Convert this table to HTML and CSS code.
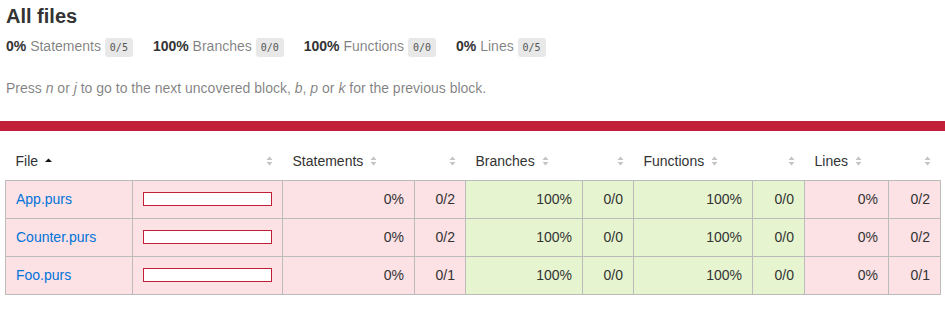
FILE: index.html
```html
<!DOCTYPE html>
<html lang="en">
<head>
<meta charset="utf-8">
<title>Code coverage report for All files</title>
<link rel="stylesheet" href="styles.css">
</head>
<body>
<div class="head">
  <h1>All files</h1>
  <div class="summary">
    <div class="stat"><span class="strong">0% </span> <span class="quiet">Statements</span> <span class="fraction">0/5</span></div>
    <div class="stat"><span class="strong">100% </span> <span class="quiet">Branches</span> <span class="fraction">0/0</span></div>
    <div class="stat"><span class="strong">100% </span> <span class="quiet">Functions</span> <span class="fraction">0/0</span></div>
    <div class="stat"><span class="strong">0% </span> <span class="quiet">Lines</span> <span class="fraction">0/5</span></div>
  </div>
  <p class="quiet hint">Press <em>n</em> or <em>j</em> to go to the next uncovered block, <em>b</em>, <em>p</em> or <em>k</em> for the previous block.</p>
</div>
<div class="status-line low"></div>
<div class="body">
<table class="coverage-summary">
  <colgroup>
    <col class="c-file"><col class="c-pic"><col class="c-st"><col class="c-abs"><col class="c-br"><col class="c-abs"><col class="c-fn"><col class="c-abs2"><col class="c-ln"><col class="c-abs2">
  </colgroup>
  <thead>
    <tr>
      <th class="file sorted">File<svg class="sorter" viewBox="0 0 7 10" width="7" height="10"><polygon points="0,6 3.5,2.5 7,6" fill="#111"/></svg></th>
      <th class="pic"><svg class="sorter" viewBox="0 0 7 10" width="7" height="10"><polygon points="0.5,4 3.5,0.5 6.5,4" fill="#c4c4c4"/><polygon points="0.5,6 6.5,6 3.5,9.5" fill="#c4c4c4"/></svg></th>
      <th class="pct">Statements<svg class="sorter" viewBox="0 0 7 10" width="7" height="10"><polygon points="0.5,4 3.5,0.5 6.5,4" fill="#c4c4c4"/><polygon points="0.5,6 6.5,6 3.5,9.5" fill="#c4c4c4"/></svg></th>
      <th class="abs"><svg class="sorter" viewBox="0 0 7 10" width="7" height="10"><polygon points="0.5,4 3.5,0.5 6.5,4" fill="#c4c4c4"/><polygon points="0.5,6 6.5,6 3.5,9.5" fill="#c4c4c4"/></svg></th>
      <th class="pct">Branches<svg class="sorter" viewBox="0 0 7 10" width="7" height="10"><polygon points="0.5,4 3.5,0.5 6.5,4" fill="#c4c4c4"/><polygon points="0.5,6 6.5,6 3.5,9.5" fill="#c4c4c4"/></svg></th>
      <th class="abs"><svg class="sorter" viewBox="0 0 7 10" width="7" height="10"><polygon points="0.5,4 3.5,0.5 6.5,4" fill="#c4c4c4"/><polygon points="0.5,6 6.5,6 3.5,9.5" fill="#c4c4c4"/></svg></th>
      <th class="pct">Functions<svg class="sorter" viewBox="0 0 7 10" width="7" height="10"><polygon points="0.5,4 3.5,0.5 6.5,4" fill="#c4c4c4"/><polygon points="0.5,6 6.5,6 3.5,9.5" fill="#c4c4c4"/></svg></th>
      <th class="abs"><svg class="sorter" viewBox="0 0 7 10" width="7" height="10"><polygon points="0.5,4 3.5,0.5 6.5,4" fill="#c4c4c4"/><polygon points="0.5,6 6.5,6 3.5,9.5" fill="#c4c4c4"/></svg></th>
      <th class="pct">Lines<svg class="sorter" viewBox="0 0 7 10" width="7" height="10"><polygon points="0.5,4 3.5,0.5 6.5,4" fill="#c4c4c4"/><polygon points="0.5,6 6.5,6 3.5,9.5" fill="#c4c4c4"/></svg></th>
      <th class="abs"><svg class="sorter" viewBox="0 0 7 10" width="7" height="10"><polygon points="0.5,4 3.5,0.5 6.5,4" fill="#c4c4c4"/><polygon points="0.5,6 6.5,6 3.5,9.5" fill="#c4c4c4"/></svg></th>
    </tr>
  </thead>
  <tbody>
    <tr>
      <td class="file low"><a href="#">App.purs</a></td>
      <td class="pic low"><div class="chart"><div class="cover-empty"></div></div></td>
      <td class="pct low">0%</td>
      <td class="abs low">0/2</td>
      <td class="pct high">100%</td>
      <td class="abs high">0/0</td>
      <td class="pct high">100%</td>
      <td class="abs high">0/0</td>
      <td class="pct low">0%</td>
      <td class="abs low">0/2</td>
    </tr>
    <tr>
      <td class="file low"><a href="#">Counter.purs</a></td>
      <td class="pic low"><div class="chart"><div class="cover-empty"></div></div></td>
      <td class="pct low">0%</td>
      <td class="abs low">0/2</td>
      <td class="pct high">100%</td>
      <td class="abs high">0/0</td>
      <td class="pct high">100%</td>
      <td class="abs high">0/0</td>
      <td class="pct low">0%</td>
      <td class="abs low">0/2</td>
    </tr>
    <tr>
      <td class="file low"><a href="#">Foo.purs</a></td>
      <td class="pic low"><div class="chart"><div class="cover-empty"></div></div></td>
      <td class="pct low">0%</td>
      <td class="abs low">0/1</td>
      <td class="pct high">100%</td>
      <td class="abs high">0/0</td>
      <td class="pct high">100%</td>
      <td class="abs high">0/0</td>
      <td class="pct low">0%</td>
      <td class="abs low">0/1</td>
    </tr>
  </tbody>
</table>
</div>
</body>
</html>
```

FILE: styles.css
```css
*, *::before, *::after { box-sizing: border-box; }
html, body { margin: 0; padding: 0; }
body {
  font-family: "Liberation Sans", Arial, sans-serif;
  font-size: 14px;
  color: #333;
  background: #fff;
}
.head { padding: 5px 5px 24px 6px; }
h1 { font-size: 20px; margin: 0; line-height: 23px; }
.summary { display: flex; }
.stat { padding: 10px 20px 10px 0; line-height: 17px; }
.strong { font-weight: bold; }
.quiet { color: rgba(0,0,0,0.5); }
.fraction {
  font-family: "DejaVu Sans Mono", "Liberation Mono", monospace;
  font-size: 10px;
  color: #555;
  background: #e8e8e8;
  padding: 4px 5px;
  border-radius: 3px;
  vertical-align: middle;
}
.hint { margin: 14px 0 0 0; line-height: 17px; }
.status-line { height: 10px; }
.status-line.low { background: #C21F39; }
.body { padding: 12px 5px 10px; }
.coverage-summary {
  border-collapse: collapse;
  width: 100%;
  table-layout: fixed;
}
.c-file { width: 127px; }
.c-pic { width: 150px; }
.c-st { width: 132px; }
.c-abs { width: 51px; }
.c-br { width: 117px; }
.c-fn { width: 119px; }
.c-abs2 { width: 52px; }
.c-ln { width: 84px; }
.coverage-summary tr { border-bottom: 1px solid #bbb; }
.coverage-summary tbody { border: 1px solid #bbb; }
.coverage-summary td, .coverage-summary th { padding: 10px; line-height: 17px; }
.coverage-summary td { border-right: 1px solid #bbb; }
.coverage-summary td:last-child { border-right: none; }
.coverage-summary th { text-align: left; font-weight: normal; white-space: nowrap; }
.coverage-summary th.pic, .coverage-summary th.abs,
.coverage-summary td.pct, .coverage-summary td.abs { text-align: right; }
.coverage-summary td.file { white-space: nowrap; }
.sorter { display: inline-block; margin-left: 7px; vertical-align: baseline; }
a { color: #0074D9; text-decoration: none; }
.low { background: #FCE1E5; }
.high { background: rgb(230,245,208); }
.chart { line-height: 0; border: 1px solid #C21F39; }
.cover-empty { display: block; height: 12px; width: 100%; background: #fff; }
```
